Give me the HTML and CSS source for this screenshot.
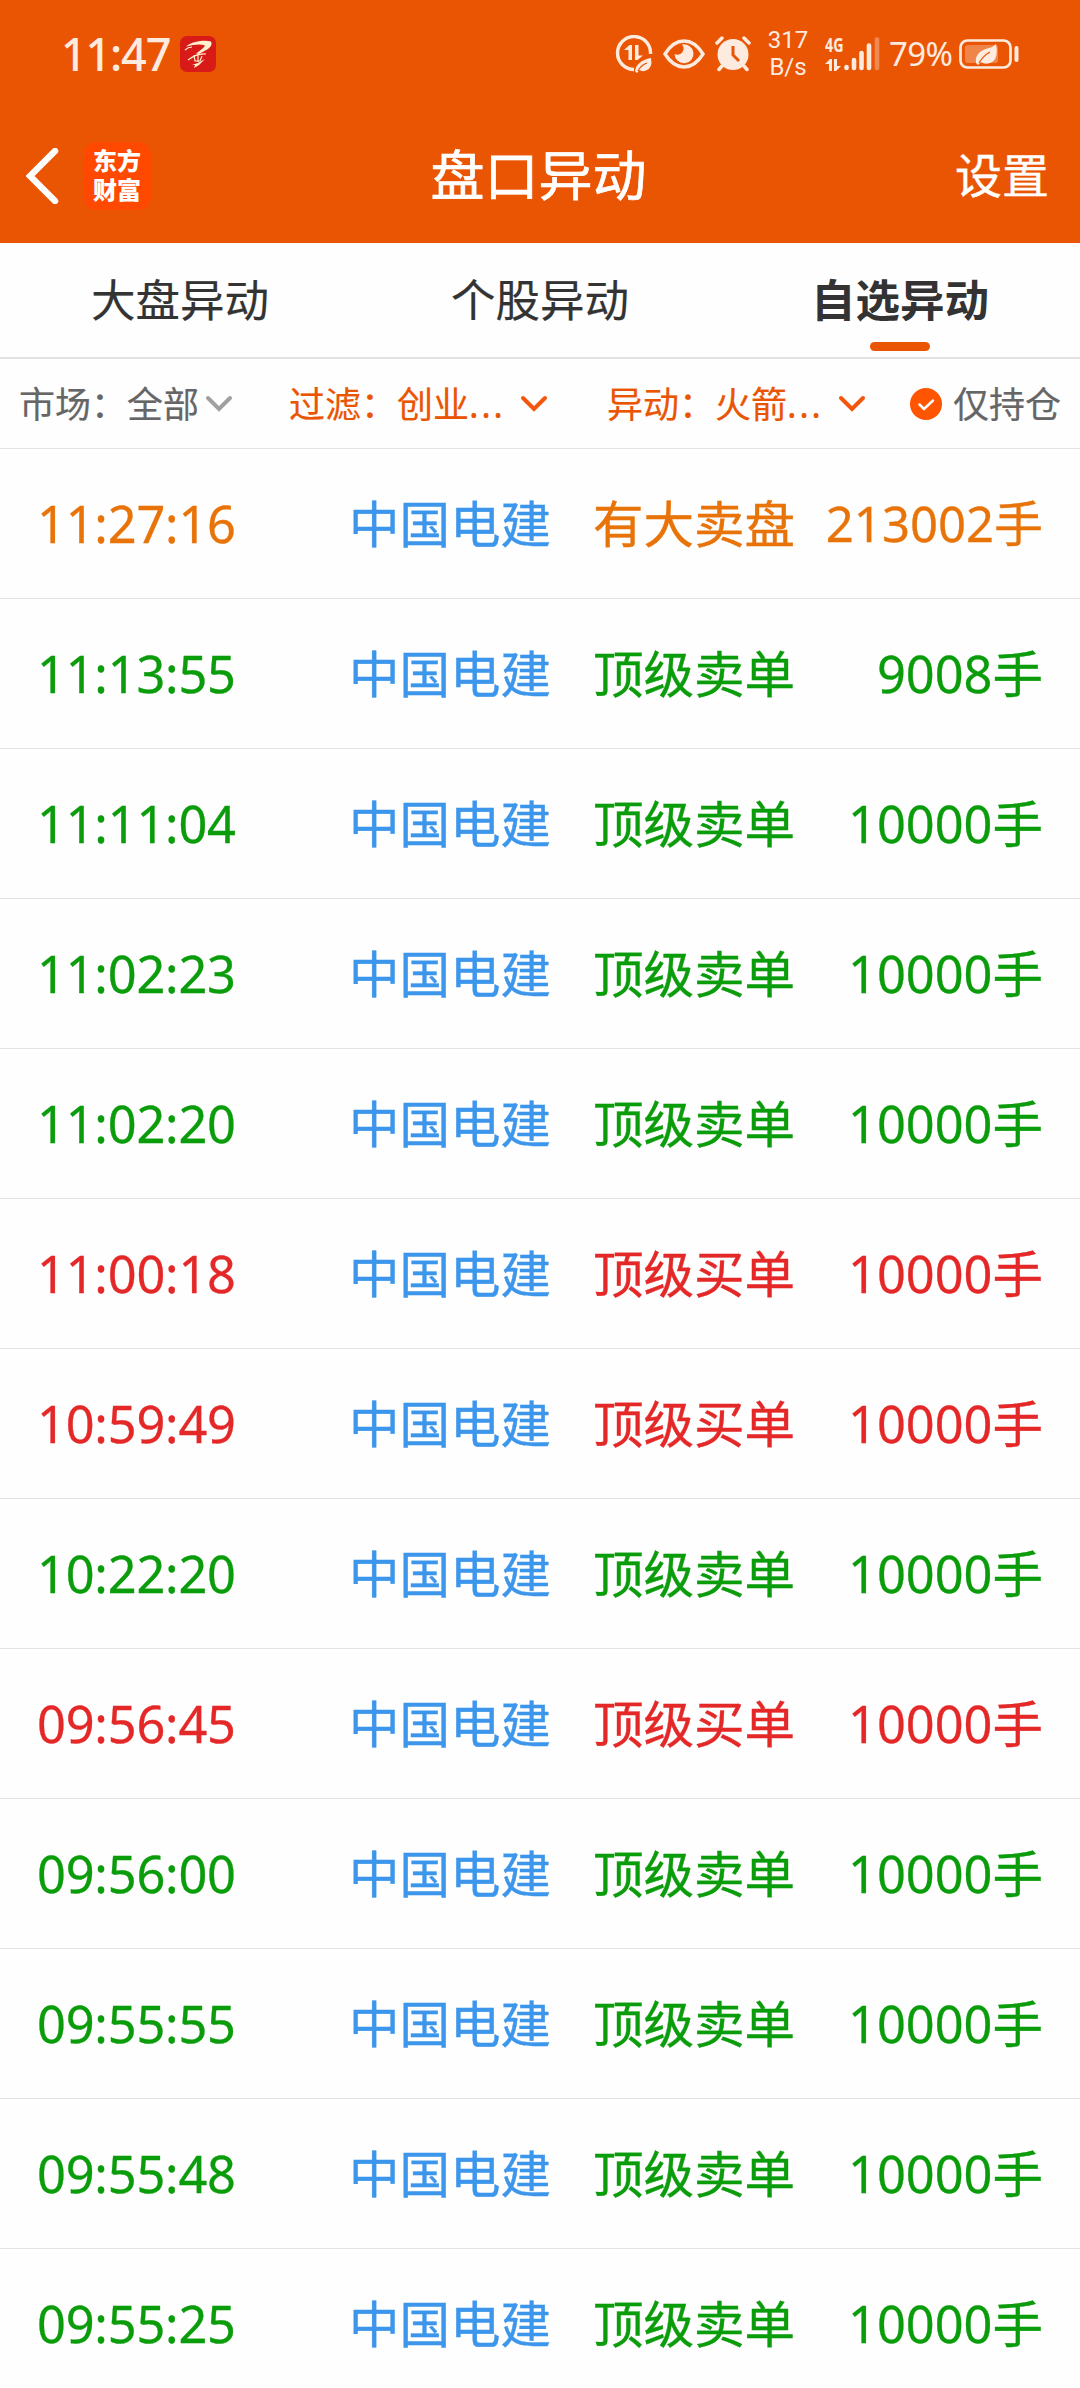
FILE: index.html
```html
<!DOCTYPE html>
<html lang="zh-CN">
<head>
<meta charset="utf-8">
<title>盘口异动</title>
<link rel="stylesheet" href="styles.css">
</head>
<body>
<header class="top">
  <div class="status">
    <span class="clock">11:47</span>
    <svg class="app" width="36" height="36" viewBox="0 0 36 36"><rect width="36" height="36" rx="7" fill="#d81a18"/><path fill="#fff0cf" d="M6 10.500C13 5 25 4 31 5.500Q33 9 28 13L19 18L16 17.500Q24 12 25 9.500Q19 7 6 10.500Z"/><path fill="none" stroke="#fff0cf" stroke-width="1.200" d="M5 14Q8 11 12 11M8 24Q17 17 26 18M14 19L15 25L20 25L22 20M18 18V26"/><path fill="#fff0cf" d="M12 29Q19 27 25 23L19 29L14 32L15 29Z"/></svg>
    <span class="grow"></span>
    <svg class="i-data" width="38" height="38" viewBox="0 0 38 38"><path d="M35.500 19A16.500 16.500 0 1 0 19 34.500" fill="none" stroke="#fdebe0" stroke-width="3.400"/><path d="M9 15L14.500 10H17V25H13.500V15ZM20 10H23.500V20.500H28L22.500 25H20Z" fill="#fdebe0"/><path d="M36 23Q38 33 31 35.500Q27 37 24.500 35L22 38L20 36.500Q21 26 36 23Z" fill="#fdebe0"/><path d="M23 36Q26 30 32 28" fill="none" stroke="#ea5504" stroke-width="1.300"/></svg>
    <svg class="i-eye" width="42" height="30" viewBox="0 0 42 30"><path d="M2 15Q10 2 21 2T40 15Q32 28 21 28T2 15Z" fill="none" stroke="#fdebe0" stroke-width="3.400"/><path d="M19 5.500A9.500 9.500 0 1 1 11.500 15Q17 17 19.500 13T19 5.500Z" fill="#fdebe0"/></svg>
    <svg class="i-alarm" width="36" height="36" viewBox="0 0 36 36"><circle cx="18" cy="18.500" r="15.500" fill="#fdebe0"/><path d="M2 7L7 2M29 2L34 7M7 30L4 33.500M29 30L32 33.500" stroke="#fdebe0" stroke-width="3.500" stroke-linecap="round"/><path d="M18 10V19L24 25" fill="none" stroke="#ea5504" stroke-width="3"/></svg>
    <span class="rate"><span>317</span><span>B/s</span></span>
    <span class="net"><span class="gen">4G</span><svg width="16" height="12" viewBox="0 0 16 12"><path d="M0 5L5 0H7V12H4V5ZM9 0H12V7H16L11 12H9Z" fill="#fdebe0"/></svg></span>
    <svg class="i-signal" width="36" height="34" viewBox="0 0 36 34"><g stroke="#fdebe0" stroke-width="4.600" stroke-linecap="round"><path d="M2.500 30V31M10 23V31M17.500 16V31M25 8.500V31"/><path d="M33 2.500V31" opacity=".35"/></g></svg>
    <span class="pct">79%</span>
    <svg class="i-batt" width="61" height="31" viewBox="0 0 61 31"><rect x="1.500" y="1.500" width="50" height="27" rx="7" fill="none" stroke="#fdebe0" stroke-width="2.700"/><rect x="6" y="6" width="33" height="18" rx="3" fill="#fdebe0" opacity=".32"/><path d="M37 5Q40 21 31 24Q26 26 22 23L19 26L17 24Q16 17 21 13Q25 10 30 9Q34 8 37 5Z" fill="#fdebe0"/><path d="M20 24Q24 17 31 13" fill="none" stroke="#ea5504" stroke-width="1.200"/><rect x="55.500" y="7" width="4" height="16" rx="2" fill="#fdebe0"/></svg>
  </div>
  <div class="nav">
    <div class="left">
      <svg width="33" height="56" viewBox="0 0 33 56"><path d="M29 3L4 28L29 53" fill="none" stroke="#fff" stroke-width="6.500" stroke-linecap="round"/></svg>
      <div class="logo">东方财富</div>
    </div>
    <h1 class="title">盘口异动</h1>
    <span class="settings">设置</span>
  </div>
</header>
<nav class="tabs">
  <span class="tab">大盘异动</span><span class="tab">个股异动</span><span class="tab active">自选异动</span>
</nav>
<div class="filters">
  <span class="f f1"><span>市场：</span><span>全部</span><svg width="28" height="18" viewBox="0 0 28 18"><path d="M3 3L14 14L25 3"/></svg></span>
  <span class="f f2 on"><span>过滤：</span><span>创业<i>...</i></span><svg width="28" height="18" viewBox="0 0 28 18"><path d="M3 3L14 14L25 3"/></svg></span>
  <span class="f f3 on"><span>异动：</span><span>火箭<i>...</i></span><svg width="28" height="18" viewBox="0 0 28 18"><path d="M3 3L14 14L25 3"/></svg></span>
  <span class="f f4"><svg width="32" height="32" viewBox="0 0 32 32"><circle cx="16" cy="16" r="16"/><path d="M9.500 16.500L14 21L23 12.500"/></svg><span>仅持仓</span></span>
</div>
<main class="list">
  <div class="row big"><span class="time">11:27:16</span><span class="name">中国电建</span><span class="kind">有大卖盘</span><span class="amt fit">213002手</span></div>
  <div class="row sell"><span class="time">11:13:55</span><span class="name">中国电建</span><span class="kind">顶级卖单</span><span class="amt">9008手</span></div>
  <div class="row sell"><span class="time">11:11:04</span><span class="name">中国电建</span><span class="kind">顶级卖单</span><span class="amt">10000手</span></div>
  <div class="row sell"><span class="time">11:02:23</span><span class="name">中国电建</span><span class="kind">顶级卖单</span><span class="amt">10000手</span></div>
  <div class="row sell"><span class="time">11:02:20</span><span class="name">中国电建</span><span class="kind">顶级卖单</span><span class="amt">10000手</span></div>
  <div class="row buy"><span class="time">11:00:18</span><span class="name">中国电建</span><span class="kind">顶级买单</span><span class="amt">10000手</span></div>
  <div class="row buy"><span class="time">10:59:49</span><span class="name">中国电建</span><span class="kind">顶级买单</span><span class="amt">10000手</span></div>
  <div class="row sell"><span class="time">10:22:20</span><span class="name">中国电建</span><span class="kind">顶级卖单</span><span class="amt">10000手</span></div>
  <div class="row buy"><span class="time">09:56:45</span><span class="name">中国电建</span><span class="kind">顶级买单</span><span class="amt">10000手</span></div>
  <div class="row sell"><span class="time">09:56:00</span><span class="name">中国电建</span><span class="kind">顶级卖单</span><span class="amt">10000手</span></div>
  <div class="row sell"><span class="time">09:55:55</span><span class="name">中国电建</span><span class="kind">顶级卖单</span><span class="amt">10000手</span></div>
  <div class="row sell"><span class="time">09:55:48</span><span class="name">中国电建</span><span class="kind">顶级卖单</span><span class="amt">10000手</span></div>
  <div class="row sell"><span class="time">09:55:25</span><span class="name">中国电建</span><span class="kind">顶级卖单</span><span class="amt">10000手</span></div>
</main>
</body>
</html>
```
FILE: styles.css
```css
* { box-sizing: border-box; }
body {
  margin: 0;
  width: 1080px;
  height: 2388px;
  overflow: hidden;
  background: #fefefe;
  color: #333;
  font-family: "Noto Sans", "Noto Sans CJK SC", sans-serif;
  white-space: nowrap;
}
svg { display: block; flex: none; }
.top { height: 243px; background: #ea5504; color: #fff; }
.status { display: flex; align-items: center; height: 108px; padding: 0 60px 0 61px; color: #fdebe0; }
.clock { font-size: 45px; font-weight: 500; letter-spacing: -1.2px; width: 119px; line-height: 60px; }
.grow { flex: 1; }
.i-data { margin-right: 10px; }
.i-eye { margin-right: 10px; }
.i-alarm { margin-right: 17px; }
.rate { display: flex; flex-direction: column; align-items: center; width: 40px; margin-right: 17px; font: 24px/27px Roboto, sans-serif; }
.net { display: flex; flex-direction: column; gap: 5px; width: 19px; }
.gen { font: 700 19px/17px "Noto Sans", sans-serif; transform: scaleX(.75); transform-origin: left; }
.i-signal { margin-right: 9px; }
.pct { font: 33px/44px "Noto Sans", sans-serif; letter-spacing: -.6px; width: 70px; }
.nav { display: grid; grid-template-columns: 1fr auto 1fr; align-items: center; height: 135px; padding: 0 31px 0 26px; }
.left { display: flex; align-items: center; gap: 24px; }
.logo { width: 68px; height: 68px; padding: 3px 8px 0 10px; border-radius: 14px; background: #ff4800; font: 900 24px/29px "Noto Sans CJK SC", sans-serif; white-space: normal; }
.title { margin: 0; padding: 0 0 6px 2px; font-size: 54px; font-weight: 400; -webkit-text-stroke: .7px; }
.settings { justify-self: end; padding-bottom: 6px; font-size: 47px; -webkit-text-stroke: .4px; }
.tabs { display: grid; grid-template-columns: repeat(3, 1fr); height: 116px; border-bottom: 2px solid #e2e2e2; }
.tab { display: flex; justify-content: center; align-items: center; position: relative; padding-bottom: 6px; font-size: 44.5px; -webkit-text-stroke: .2px; }
.active { font-weight: 700; -webkit-text-stroke: 0; }
.active::after { content: ""; position: absolute; bottom: 6px; width: 60px; height: 9px; border-radius: 5px; background: #ea5504; }
.filters { display: flex; align-items: center; height: 90px; padding: 0 19px; border-bottom: 1px solid #e2e2e2; font-size: 36px; color: #666; }
.f { display: flex; align-items: center; flex: none; }
.f span { padding-bottom: 3px; -webkit-text-stroke: .2px; }
.f svg { fill: none; stroke: #a0a0a0; stroke-width: 4; stroke-linecap: round; }
.f i { font-style: normal; letter-spacing: 2.5px; }
.f1 { width: 270px; }
.f1 svg { margin-left: 6px; }
.f2 { width: 318px; }
.f3 { width: 290px; }
.on { color: #ea5504; }
.on svg { stroke: #f4560d; margin-left: 15px; }
.f4 { gap: 11px; margin-left: auto; }
.f4 circle { fill: #ff5400; stroke: none; }
.f4 path { stroke: #fff; stroke-width: 2.5; }
.row { display: grid; grid-template-columns: 312px 244px 1fr auto; align-items: center; height: 150px; padding: 0 37px; border-bottom: 1px solid #e2e2e2; font-size: 50.5px; }
.time { letter-spacing: -.2px; -webkit-text-stroke: .3px; }
.name { color: #3c96eb; }
.name, .kind { padding-bottom: 6px; -webkit-text-stroke: .4px; }
.amt { padding-bottom: 6px; -webkit-text-stroke: .3px; }
.fit { font-size: 49px; }
.big { color: #e87308; }
.sell { color: #0a9c0a; }
.buy { color: #e42828; }
```
